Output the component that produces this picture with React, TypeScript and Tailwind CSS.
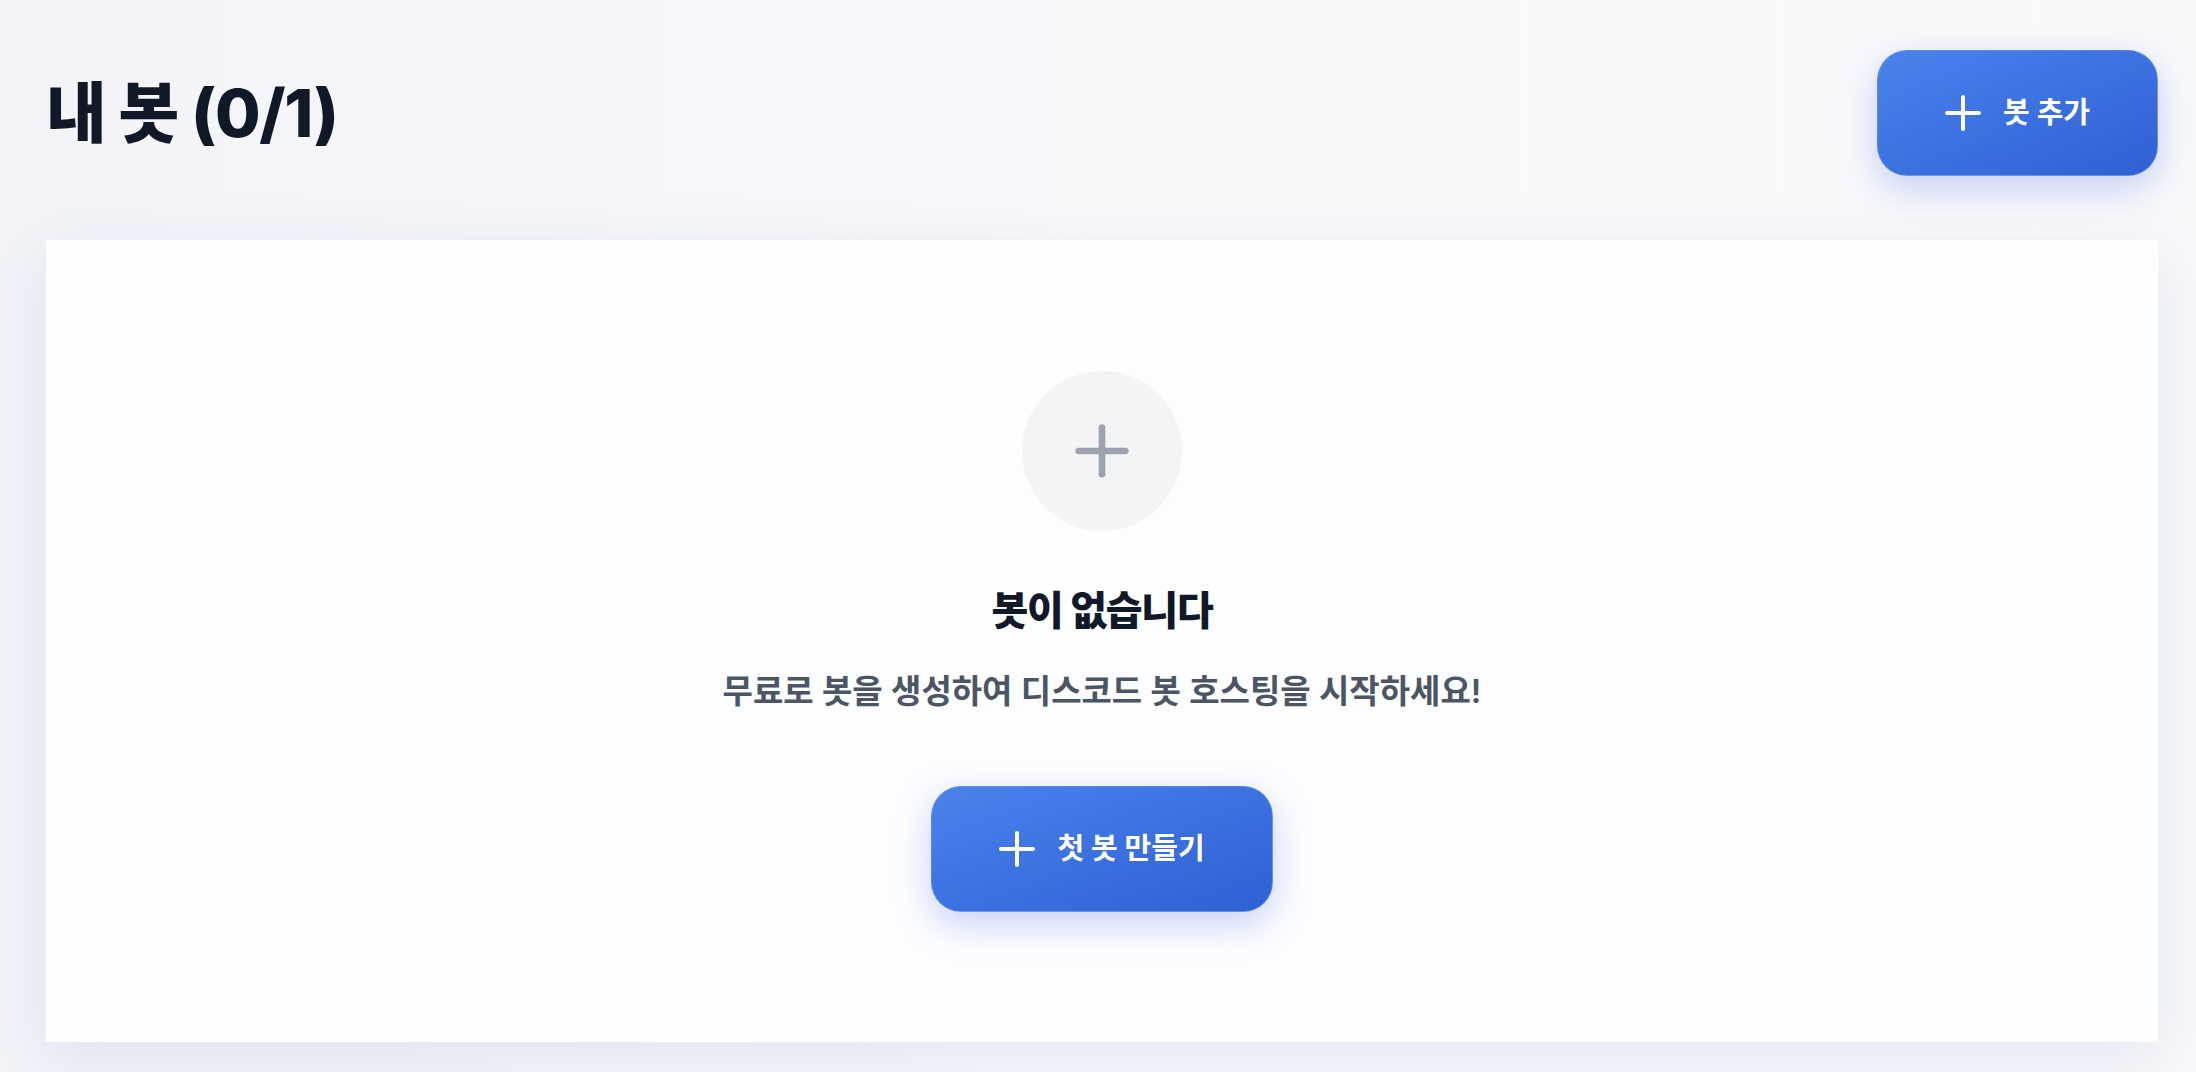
import { Plus } from "lucide-react";

const font = { fontFamily: 'Inter, "Noto Sans CJK KR", sans-serif' };

function PlusMark() {
  return (
    <svg width="36" height="36" viewBox="0 0 36 36" fill="none" stroke="currentColor" strokeWidth="4" strokeLinecap="round">
      <path d="M18 2v32M2 18h32" />
    </svg>
  );
}

function PrimaryButton({ label }: { label: string }) {
  return (
    <button
      type="button"
      className="flex h-[126px] items-center justify-center gap-[22px] rounded-[30px] border border-white/20 bg-gradient-to-br from-[#4a83ec] to-[#2f5fd4] px-[67px] text-[29px] font-bold text-white shadow-[0_12px_36px_rgba(59,100,230,0.28)]"
    >
      <PlusMark />
      <span>{label}</span>
    </button>
  );
}

export default function App() {
  return (
    <div
      className="min-h-screen w-full bg-gradient-to-r from-[#f2f4f8] via-[#f8f9fb] to-[#f8f9fb] pb-[30px] pl-[46px] pr-[38px] pt-[50px]"
      style={font}
    >
      {/* Header */}
      <div className="flex items-center justify-between">
        <h1 className="text-[66px] font-extrabold leading-none tracking-[-0.02em] text-[#111827]">내 봇 (0/1)</h1>
        <PrimaryButton label="봇 추가" />
      </div>

      {/* Empty state card */}
      <div className="mt-[64px] flex h-[802px] flex-col items-center justify-center bg-[#fcfdff] shadow-[0_16px_60px_rgba(90,100,190,0.13)]">
        <div className="flex h-40 w-40 items-center justify-center rounded-full bg-[#f3f4f6]">
          <Plus className="h-20 w-20 text-[#9ca3af]" strokeWidth={2} />
        </div>
        <h2 className="mt-[56px] text-[40px] font-extrabold leading-[48px] tracking-[-0.03em] text-[#111827]">봇이 없습니다</h2>
        <p className="mt-[37px] text-[33px] font-semibold leading-[38px] text-[#4b5563]">
          무료로 봇을 생성하여 디스코드 봇 호스팅을 시작하세요!
        </p>
        <div className="mt-[76px]">
          <PrimaryButton label="첫 봇 만들기" />
        </div>
      </div>
    </div>
  );
}
